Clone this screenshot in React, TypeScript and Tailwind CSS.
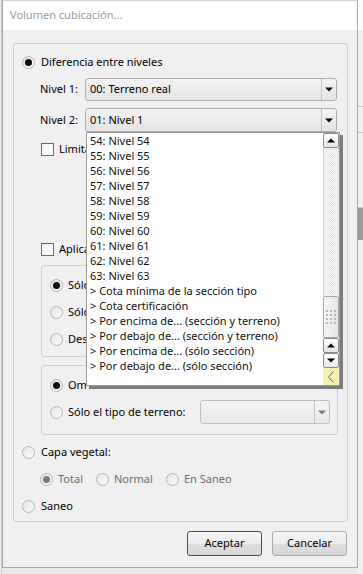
import React from "react";

const font = "font-['Noto_Sans','Liberation_Sans',sans-serif]";

const Radio = ({ checked, disabled }: { checked?: boolean; disabled?: boolean }) => (
  <span className="relative w-[13px] h-[13px] rounded-full border border-[#b4b4b4] bg-[linear-gradient(135deg,#e4e4e4,#fbfbfb)] flex items-center justify-center shrink-0">
    {checked && (
      <span
        className={
          "w-[7px] h-[7px] rounded-full " +
          (disabled ? "bg-[#7a7a7a]" : "bg-[#0a0a0a]")
        }
      />
    )}
  </span>
);

const Check = () => (
  <span className="w-[13px] h-[13px] border border-[#5d6d80] bg-[linear-gradient(135deg,#f0f0f0,#ffffff)] shrink-0" />
);

const Arrow = ({ up, gray }: { up?: boolean; gray?: boolean }) => (
  <svg width="8" height="5" viewBox="0 0 8 5">
    <path
      d={up ? "M0 4.5 L4 0.5 L8 4.5 Z" : "M0 0.5 L8 0.5 L4 4.5 Z"}
      fill={gray ? "#7a7a7a" : "#000"}
    />
  </svg>
);

const Combo = ({ text, disabled, className }: { text?: string; disabled?: boolean; className: string }) => (
  <div
    className={
      "flex h-[23px] rounded-[3px] border " +
      (disabled
        ? "border-[#bdbdbd] bg-[linear-gradient(#f4f4f4,#e8e8e8)] "
        : "border-[#acacac] bg-[linear-gradient(#f3f3f3,#e4e4e4)] ") +
      className
    }
  >
    <div className="flex-1 flex items-center pl-[4px] text-black">{text}</div>
    <div className="w-[15px] border-l border-[#c3c3c3] flex items-center justify-center">
      <Arrow gray={disabled} />
    </div>
  </div>
);

const items = [
  "54: Nivel 54",
  "55: Nivel 55",
  "56: Nivel 56",
  "57: Nivel 57",
  "58: Nivel 58",
  "59: Nivel 59",
  "60: Nivel 60",
  "61: Nivel 61",
  "62: Nivel 62",
  "63: Nivel 63",
  "> Cota mínima de la sección tipo",
  "> Cota certificación",
  "> Por encima de... (sección y terreno)",
  "> Por debajo de... (sección y terreno)",
  "> Por encima de... (sólo sección)",
  "> Por debajo de... (sólo sección)",
];

const ScrollBtn = ({ up }: { up?: boolean }) => (
  <div className="h-[15px] rounded-[2px] border border-[#8c8c8c] bg-[linear-gradient(#ffffff,#e6e6e6)] flex items-center justify-center">
    <Arrow up={up} />
  </div>
);

const DropList = () => (
  <div className="absolute left-[1px] top-full w-[254px] h-[254px] bg-white border border-[#9a9a9a] shadow-[3px_3px_0_#7c7c7c] flex z-10">
    <div className="flex-1 flex flex-col">
      {items.map((t) => (
        <div key={t} className="h-[15px] leading-[15px] pl-[3px] whitespace-nowrap text-[#111]">
          {t}
        </div>
      ))}
    </div>
    <div className="w-[16px] flex flex-col">
      <ScrollBtn up />
      <div className="flex-1 border-x border-dotted border-[#c4c4c4] bg-[repeating-conic-gradient(#e6e6e6_0_25%,#fafafa_0_50%)] bg-[length:2px_2px]" />
      <div className="h-[42px] rounded-[2px] border border-[#a8a8a8] bg-[linear-gradient(90deg,#f6f6f6,#e4e4e4)] flex items-center justify-center">
        <div className="grid grid-cols-3 gap-[2px]">
          {Array.from({ length: 12 }).map((_, i) => (
            <span key={i} className="w-[2px] h-[2px] bg-[#b6b6b6]" />
          ))}
        </div>
      </div>
      <ScrollBtn up />
      <ScrollBtn />
      <div className="h-[17px] bg-[#f5f1b4] flex items-center justify-center">
        <svg width="8" height="12" viewBox="0 0 8 12">
          <path d="M6.5 0.5 L1.5 6 L6.5 11.5" fill="none" stroke="#6a6a6a" strokeWidth="1" />
        </svg>
      </div>
    </div>
  </div>
);

const Group = ({ className, children }: { className: string; children: React.ReactNode }) => (
  <div className={"border border-[#cfcfcf] rounded-[3px] " + className}>{children}</div>
);

const Button = ({ text, def }: { text: string; def?: boolean }) => (
  <div
    className={
      "w-[75px] h-[25px] rounded-[3px] border flex items-center justify-center text-black bg-[linear-gradient(#f6f6f6_0%,#ececec_50%,#dedede_51%,#d8d8d8_100%)] " +
      (def ? "border-[#4d4d4d]" : "border-[#acacac]")
    }
  >
    {text}
  </div>
);

// texto tapado por la lista desplegable: se recorta donde empieza la lista
const Hidden = ({ text, w }: { text: string; w: string }) => (
  <span className={"overflow-hidden whitespace-nowrap " + w}>{text}</span>
);

export default function App() {
  return (
    <div className={"w-[363px] h-[574px] bg-[#e9e9e9] flex overflow-hidden text-[11px] " + font}>
      <div className="w-[2px] bg-[#f0f0f0] border-r border-[#c8c8c8]" />
      <div className="w-[356px] h-[568px] border border-t-[#cfcfcf] border-[#a8a8a8] flex flex-col shrink-0">
        <div className="h-[29px] bg-white flex items-center pl-[7px] text-[#9b9b9b]">
          Volumen cubicación...
        </div>
        <div className="flex-1 bg-[#f0f0f0] pl-[10px] pr-[9px] pt-[13px] flex flex-col">
          <Group className="h-[479px] flex flex-col pl-[8px] pt-[10px]">
            <div className="h-[16px] flex items-center gap-[6px]">
              <Radio checked />
              <span>Diferencia entre niveles</span>
            </div>
            <div className="mt-[8px] flex items-center h-[23px] pl-[18px]">
              <span className="w-[45px]">Nivel 1:</span>
              <Combo text="00: Terreno real" className="w-[252px]" />
            </div>
            <div className="mt-[7px] flex items-center h-[24px] pl-[18px]">
              <span className="w-[45px]">Nivel 2:</span>
              <div className="relative">
                <Combo text="01: Nivel 1" className="w-[252px] h-[24px]" />
                <DropList />
              </div>
            </div>
            <div className="mt-[9px] h-[16px] flex items-center gap-[5px] pl-[19px]">
              <Check />
              <Hidden text="Limitar" w="w-[28px]" />
            </div>
            <div className="mt-[84px] h-[16px] flex items-center gap-[5px] pl-[19px]">
              <Check />
              <Hidden text="Aplicar" w="w-[28px]" />
            </div>
            <Group className="mt-[8px] ml-[19px] w-[297px] h-[92px] flex flex-col pl-[8px] pt-[11px]">
              <div className="h-[16px] flex items-center gap-[5px]">
                <Radio checked />
                <Hidden text="Sólo" w="w-[18px]" />
              </div>
              <div className="mt-[11px] h-[16px] flex items-center gap-[5px]">
                <Radio />
                <Hidden text="Sólo" w="w-[18px]" />
              </div>
              <div className="mt-[11px] h-[16px] flex items-center gap-[5px]">
                <Radio />
                <Hidden text="Desde" w="w-[18px]" />
              </div>
            </Group>
            <Group className="mt-[8px] ml-[19px] w-[297px] h-[70px] flex flex-col pl-[8px] pt-[11px]">
              <div className="h-[16px] flex items-center gap-[5px]">
                <Radio checked />
                <Hidden text="Omitir" w="w-[18px]" />
              </div>
              <div className="mt-[11px] h-[16px] flex items-center">
                <span className="flex items-center gap-[5px] w-[150px]">
                  <Radio />
                  <span>Sólo el tipo de terreno:</span>
                </span>
                <Combo disabled className="w-[130px] h-[24px]" />
              </div>
            </Group>
            <div className="mt-[9px] h-[16px] flex items-center gap-[6px]">
              <Radio />
              <span>Capa vegetal:</span>
            </div>
            <div className="mt-[11px] h-[16px] flex items-center pl-[18px] text-[#6d6d6d]">
              <span className="flex items-center gap-[5px] w-[56px]">
                <Radio checked disabled />
                Total
              </span>
              <span className="flex items-center gap-[5px] w-[70px]">
                <Radio />
                Normal
              </span>
              <span className="flex items-center gap-[5px]">
                <Radio />
                En Saneo
              </span>
            </div>
            <div className="mt-[11px] h-[16px] flex items-center gap-[6px]">
              <Radio />
              <span>Saneo</span>
            </div>
          </Group>
          <div className="mt-[9px] flex justify-end gap-[10px] pr-[1px]">
            <Button text="Aceptar" def />
            <Button text="Cancelar" />
          </div>
        </div>
      </div>
      <div className="flex-1 flex flex-col bg-[#f0f0f0]">
        <div className="h-[30px] bg-white" />
        <div className="h-[77px] border-b border-[#c8c8c8]" />
        <div className="h-[26px] border-b border-[#c8c8c8]" />
        <div className="h-[75px] border-b border-[#c8c8c8]" />
        <div className="h-[32px] bg-[#9a9a9a]" />
        <div className="flex-1" />
      </div>
    </div>
  );
}
